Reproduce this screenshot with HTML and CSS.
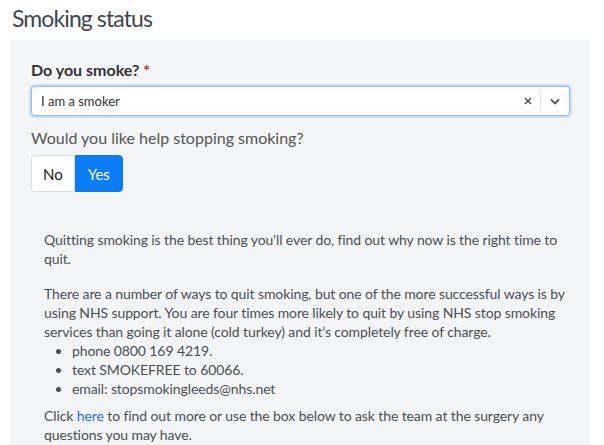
FILE: index.html
```html
<!DOCTYPE html>
<html>
<head>
<meta charset="utf-8">
<link rel="stylesheet" href="styles.css">
</head>
<body>
<h1 class="title">Smoking status</h1>
<div class="panel">
  <label class="label">Do you smoke? <span class="req">*</span></label>
  <div class="select">
    <span class="value">I am a smoker</span>
    <svg class="clear" width="8" height="8" viewBox="0 0 8 8"><path d="M1 1 L7 7 M7 1 L1 7" fill="none" stroke="#555" stroke-width="1.6"/></svg>
    <span class="sep"></span>
    <svg class="chev" width="10" height="7" viewBox="0 0 10 7"><path d="M1 1.5 L5 5.5 L9 1.5" fill="none" stroke="#555" stroke-width="1.8"/></svg>
  </div>
  <div class="question">Would you like help stopping smoking?</div>
  <div class="toggle">
    <button class="btn">No</button>
    <button class="btn active">Yes</button>
  </div>
  <div class="info">
    <p>Quitting smoking is the best thing you'll ever do, find out why now is the right time to quit.</p>
    <p class="tight">There are a number of ways to quit smoking, but one of the more successful ways is by using NHS support. You are four times more likely to quit by using NHS stop smoking services than going it alone (cold turkey) and it’s completely free of charge.</p>
    <ul>
      <li>phone 0800 169 4219.</li>
      <li>text SMOKEFREE to 60066.</li>
      <li>email: stopsmokingleeds@nhs.net</li>
    </ul>
    <p>Click <a href="#">here</a> to find out more or use the box below to ask the team at the surgery any questions you may have.</p>
  </div>
</div>
</body>
</html>
```
FILE: styles.css
```css
html, body { margin: 0; padding: 0; background: #fff; }
body { font-family: Lato, "Open Sans", sans-serif; color: #4a4f55; overflow: hidden; height: 445px; }
.title { margin: 0; padding: 3px 0 0 12px; font-size: 23px; letter-spacing: -0.9px; font-weight: 400; color: #3f464d; line-height: 30px; height: 37px; }
.panel { margin: 0 14px 0 10px; background: #f4f5f7; padding: 20px 20px 40px 20px; min-height: 420px; }
.label { display: block; font-weight: 700; font-size: 16px; color: #333; margin: 0 0 6px 1px; line-height: 20px; }
.req { color: #c81e1e; }
.select { display: flex; align-items: center; height: 28px; background: #fff; border: 1px solid #8fbcf3; border-radius: 4px; box-shadow: 0 0 0 2px #c7ddfa; margin: 0 0 0 1px; padding: 0 9px 0 9px; }
.value { flex: 1; font-size: 13px; color: #333; }
.clear { display: block; margin-right: 8px; }
.sep { width: 1px; height: 20px; background: #e2e2e2; margin-right: 9px; }
.chev { display: block; }
.question { font-size: 16px; color: #555; margin: 12px 0 7px 1px; line-height: 20px; }
.toggle { display: flex; margin-left: 1px; }
.btn { box-sizing: border-box; font-family: inherit; font-size: 15px; height: 37px; border: 1px solid #ddd; background: #fff; color: #222; padding: 0 11px; margin: 0; border-radius: 4px 0 0 4px; }
.btn.active { background: #0a7cf5; border-color: #0a7cf5; color: #fff; border-radius: 0 4px 4px 0; padding: 0 12px; }
.info { padding: 38px 0 0 14px; margin-right: -14px; font-size: 14px; letter-spacing: -0.1px; line-height: 19px; color: #4a4f55; }
.info p { margin: 0 0 16px 0; }
.info p.tight { margin: 0; }
.info ul { margin: 0 0 8px 0; padding-left: 28px; }
.info a { color: #1a73e8; text-decoration: none; }
```
